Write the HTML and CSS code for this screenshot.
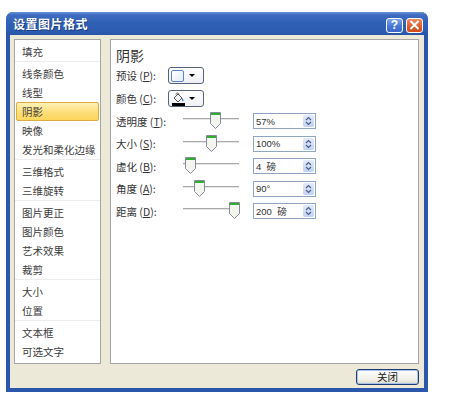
FILE: index.html
```html
<!DOCTYPE html>
<html lang="zh-CN">
<head>
    <meta charset="UTF-8">
    <meta name="viewport" content="width=device-width, initial-scale=1.0">
    <title>设置图片格式</title>
    <link rel="stylesheet" href="styles.css">
</head>
<body>
    <div class="window">
        <div class="titlebar">
            <span class="title">设置图片格式</span>
            <div class="title-buttons">
                <span class="tbtn help">?</span>
                <span class="tbtn close">
                    <svg width="11" height="10" viewBox="0 0 11 10"><path d="M1.5 1 L9.5 9 M9.5 1 L1.5 9" stroke="#fff" stroke-width="2"/></svg>
                </span>
            </div>
        </div>

        <div class="body">
            <div class="panels">
                <div class="nav">
                    <div class="group">
                        <div class="item">填充</div>
                    </div>
                    <div class="group">
                        <div class="item">线条颜色</div>
                        <div class="item">线型</div>
                        <div class="item active">阴影</div>
                        <div class="item">映像</div>
                        <div class="item">发光和柔化边缘</div>
                    </div>
                    <div class="group">
                        <div class="item">三维格式</div>
                        <div class="item">三维旋转</div>
                    </div>
                    <div class="group">
                        <div class="item">图片更正</div>
                        <div class="item">图片颜色</div>
                        <div class="item">艺术效果</div>
                        <div class="item">裁剪</div>
                    </div>
                    <div class="group">
                        <div class="item">大小</div>
                        <div class="item">位置</div>
                    </div>
                    <div class="group">
                        <div class="item">文本框</div>
                        <div class="item">可选文字</div>
                    </div>
                </div>

                <div class="content">
                    <div class="heading">阴影</div>

                    <div class="pick-row">
                        <span class="label">预设 (<u>P</u>):</span>
                        <span class="drop">
                            <span class="preset-box"></span>
                            <span class="caret"></span>
                        </span>
                    </div>
                    <div class="pick-row">
                        <span class="label">颜色 (<u>C</u>):</span>
                        <span class="drop">
                            <svg class="bucket" width="15" height="14" viewBox="0 0 15 14">
                                <path d="M3 6 L7 2 L11 6 L7 10 Z" fill="#f4f4f4" stroke="#555" stroke-width="1"/>
                                <path d="M5 2.5 C5 0.5 8 0.5 8 2.5" fill="none" stroke="#555" stroke-width="1"/>
                                <path d="M11 6 C12.5 7.5 13 8.5 12 9.5 C11 9 10.8 7.5 11 6 Z" fill="#2f6fd0"/>
                                <rect x="1" y="11" width="13" height="3" fill="#000"/>
                            </svg>
                            <span class="caret"></span>
                        </span>
                    </div>

                    <div class="sliders">
                        <span class="label">透明度 (<u>T</u>):</span>
                        <div class="slider"><span class="thumb" style="left: 27px"></span></div>
                        <div class="spin"><span class="value">57%</span><span class="arrows"></span></div>

                        <span class="label">大小 (<u>S</u>):</span>
                        <div class="slider"><span class="thumb" style="left: 23px"></span></div>
                        <div class="spin"><span class="value">100%</span><span class="arrows"></span></div>

                        <span class="label">虚化 (<u>B</u>):</span>
                        <div class="slider"><span class="thumb" style="left: 2px"></span></div>
                        <div class="spin"><span class="value">4&nbsp; 磅</span><span class="arrows"></span></div>

                        <span class="label">角度 (<u>A</u>):</span>
                        <div class="slider"><span class="thumb" style="left: 11px"></span></div>
                        <div class="spin"><span class="value">90°</span><span class="arrows"></span></div>

                        <span class="label">距离 (<u>D</u>):</span>
                        <div class="slider"><span class="thumb" style="left: 46px"></span></div>
                        <div class="spin"><span class="value">200&nbsp; 磅</span><span class="arrows"></span></div>
                    </div>
                </div>
            </div>

            <div class="footer">
                <button class="btn" type="button">关闭</button>
            </div>
        </div>
    </div>
</body>
</html>
```

FILE: styles.css
```css
body {
    margin: 0;
    background: #ffffff;
    font-family: "Noto Sans CJK SC", "Liberation Sans", sans-serif;
    color: #333;
}
.window {
    margin: 12px 0 0 6px;
    width: 422px;
    height: 380px;
    display: flex;
    flex-direction: column;
    background: #2a57ac;
    border-radius: 7px 7px 0 0;
}
.titlebar {
    height: 23px;
    display: flex;
    align-items: center;
    justify-content: space-between;
    padding: 0 5px 0 7px;
    border-radius: 7px 7px 0 0;
    background: linear-gradient(to bottom, #6a93d8 0%, #3f6cc0 12%, #3061b6 45%, #2c5cb0 85%, #2753a6 100%);
}
.title {
    color: #fff;
    font-size: 12px;
    font-weight: bold;
    letter-spacing: 0.5px;
    text-shadow: 1px 1px 0 #1a3c80;
}
.title-buttons {
    display: flex;
    gap: 3px;
    margin-top: 3px;
}
.tbtn {
    width: 15px;
    height: 13px;
    border: 1px solid #fff;
    border-radius: 3px;
    display: flex;
    align-items: center;
    justify-content: center;
    color: #fff;
    font-family: "Liberation Sans", sans-serif;
    font-weight: bold;
    font-size: 12px;
}
.help {
    background: linear-gradient(to bottom, #7aa2e8, #4675d6 60%, #3a66c8);
}
.close {
    background: linear-gradient(to bottom, #ef8a62, #e05a2c 60%, #cf4a1e);
}
.body {
    flex: 1;
    margin: 0 4px 4px;
    padding: 4px 5px 0 4px;
    background: #ece9d8;
    display: flex;
    flex-direction: column;
}
.panels {
    height: 325px;
    display: flex;
    gap: 9px;
}
.nav {
    width: 85px;
    border: 1px solid #a5a5a5;
    background: #fff;
    padding-top: 2px;
    font-size: 10.5px;
    color: #3c3c3c;
}
.group + .group {
    border-top: 1px solid #ececec;
    padding-top: 2px;
}
.item {
    height: 19px;
    line-height: 19px;
    padding-left: 6px;
    margin: 0 1px;
}
.item.active {
    background: linear-gradient(to bottom, #fff1b8, #fde07c 50%, #fcd65c);
    border: 1px solid #dcab44;
    border-radius: 2px;
    height: 17px;
    line-height: 17px;
    padding-left: 5px;
}
.content {
    flex: 1;
    border: 1px solid #a5a5a5;
    background: #fff;
    padding: 7px 0 0 5px;
    font-size: 10.5px;
}
.heading {
    font-size: 14px;
    line-height: 17px;
    margin-bottom: 3px;
}
.pick-row {
    display: flex;
    align-items: center;
    height: 17px;
    margin-bottom: 6px;
}
.pick-row .label {
    width: 52px;
}
.drop {
    width: 32px;
    height: 15px;
    border: 1px solid #56637a;
    border-radius: 3px;
    background: linear-gradient(to bottom, #ffffff, #eef0f5);
    display: flex;
    align-items: center;
    padding-left: 2px;
    gap: 5px;
}
.preset-box {
    width: 11px;
    height: 10px;
    border: 1px solid #5b86c8;
    border-radius: 2px;
    background: linear-gradient(135deg, #ffffff, #e4ecf8);
}
.caret {
    width: 0;
    height: 0;
    border-left: 3px solid transparent;
    border-right: 3px solid transparent;
    border-top: 3px solid #000;
}
.bucket {
    margin-right: -2px;
}
.sliders {
    display: grid;
    grid-template-columns: 67px 56px 77px;
    row-gap: 6.5px;
    align-items: center;
}
.slider {
    position: relative;
    height: 16px;
}
.slider::before {
    content: "";
    position: absolute;
    left: 0;
    right: 0;
    top: 5px;
    height: 1px;
    background: #a9a9a9;
    border-bottom: 1px solid #e6e6e6;
}
.thumb {
    position: absolute;
    top: -1px;
    width: 11px;
    height: 17px;
    background: url("data:image/svg+xml;utf8,<svg xmlns='http://www.w3.org/2000/svg' width='11' height='17'><path d='M0.5 0.5 H10.5 V11.5 L5.5 16.5 L0.5 11.5 Z' fill='%23f5f5f0' stroke='%23848b99'/><rect x='1' y='1' width='9' height='2' fill='%232fae2f'/></svg>") no-repeat;
}
.spin {
    margin-left: 14px;
    height: 14px;
    border: 1px solid #8fa5c4;
    display: flex;
    align-items: center;
    justify-content: space-between;
    background: #fff;
}
.value {
    font-family: "Liberation Sans", "Noto Sans CJK SC", sans-serif;
    font-size: 9.5px;
    padding-left: 2px;
}
.arrows {
    width: 11px;
    height: 12px;
    margin-right: 1px;
    border-radius: 2px;
    background: url("data:image/svg+xml;utf8,<svg xmlns='http://www.w3.org/2000/svg' width='11' height='12'><path d='M3 5 L5.5 2.5 L8 5 M3 7 L5.5 9.5 L8 7' fill='none' stroke='%234d6185' stroke-width='1.2'/></svg>") no-repeat,
        linear-gradient(to bottom, #e2eafc, #c2d2f4);
}
.footer {
    display: flex;
    justify-content: flex-end;
    padding-top: 5px;
}
.btn {
    width: 63px;
    height: 16px;
    padding: 0;
    border: 1px solid #1f3f74;
    border-radius: 3px;
    background: linear-gradient(to bottom, #ffffff, #f0efe7 70%, #dcd9cc);
    box-shadow: inset 0 0 0 1px #a9c2e8;
    font-family: "Noto Sans CJK SC", sans-serif;
    font-size: 10.5px;
    line-height: 14px;
    color: #222;
}
```
